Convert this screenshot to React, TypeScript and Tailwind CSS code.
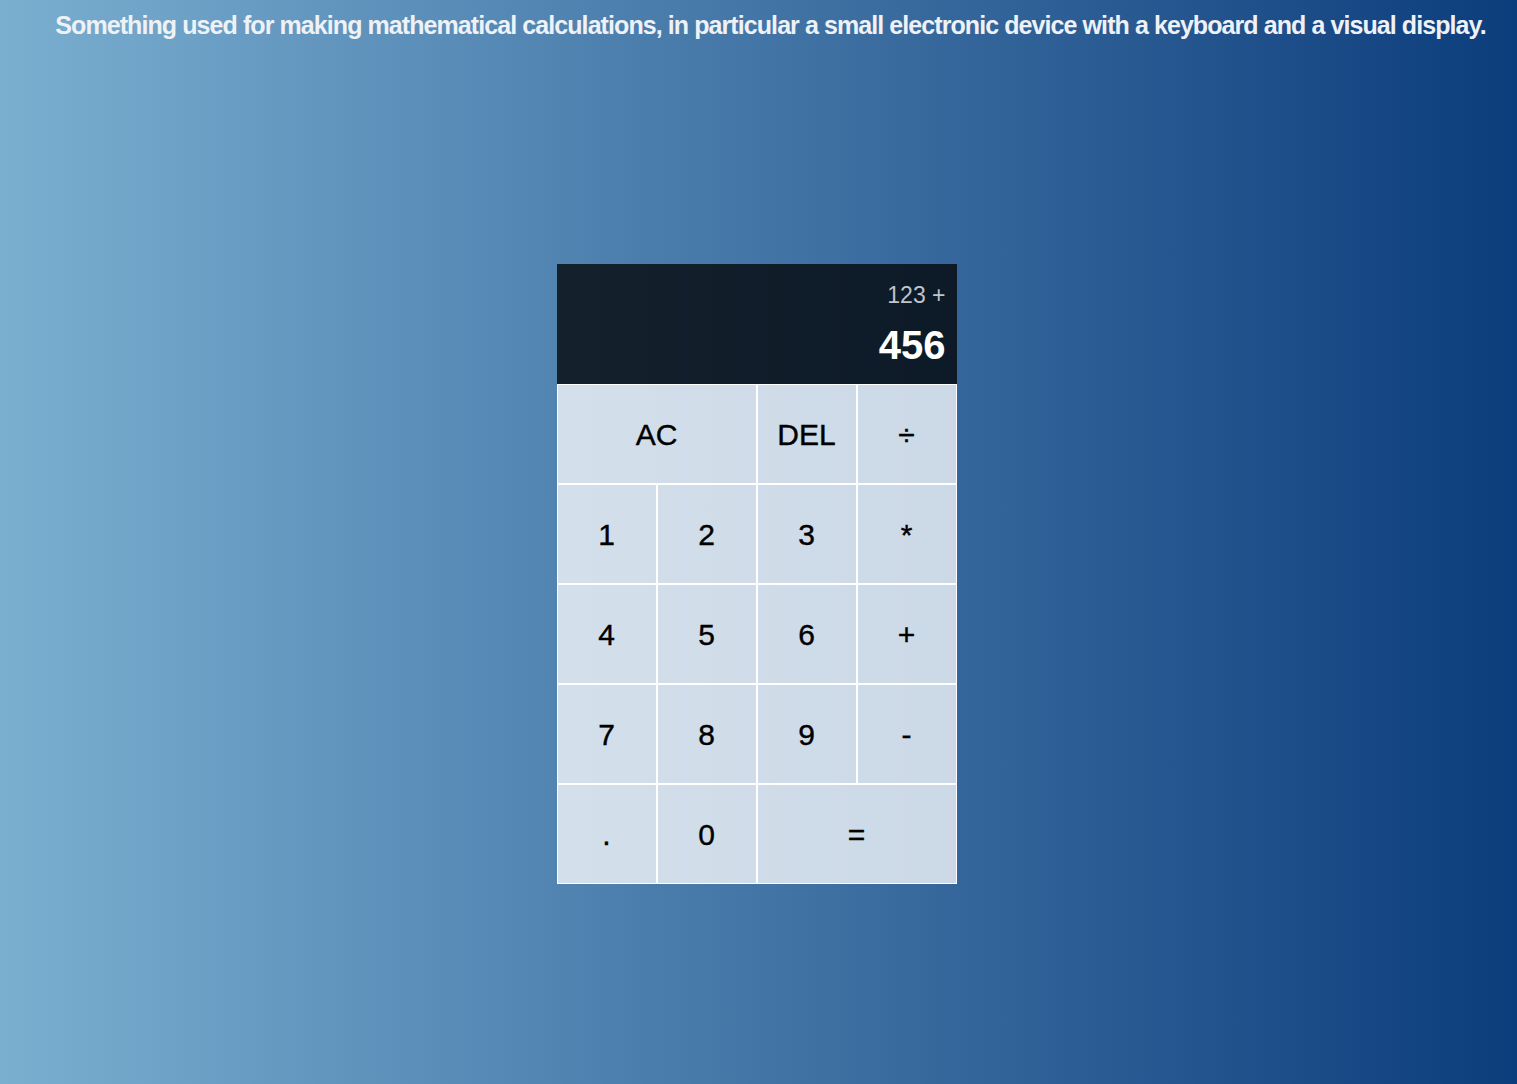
import React from "react";

const keys: { label: string; span?: boolean }[] = [
  { label: "AC", span: true },
  { label: "DEL" },
  { label: "÷" },
  { label: "1" },
  { label: "2" },
  { label: "3" },
  { label: "*" },
  { label: "4" },
  { label: "5" },
  { label: "6" },
  { label: "+" },
  { label: "7" },
  { label: "8" },
  { label: "9" },
  { label: "-" },
  { label: "." },
  { label: "0" },
  { label: "=", span: true },
];

export default function App() {
  return (
    <div className="min-h-screen w-full bg-gradient-to-r from-[#7bafd0] to-[#0b3d7c] flex flex-col items-center">
      <h1 className="pt-[9px] pl-[24px] whitespace-nowrap text-[25px] leading-[32px] font-bold tracking-[-0.92px] text-[#eef1f5] [font-family:'Liberation_Sans',Arial,sans-serif]">
        Something used for making mathematical calculations, in particular a small electronic device with a keyboard and a visual display.
      </h1>
      <div className="mt-[223px] mr-[4px] grid grid-cols-[repeat(4,100px)] grid-rows-[120px_repeat(5,100px)] [font-family:'Liberation_Sans',Arial,sans-serif]">
        <div className="col-span-4 bg-black/75 flex flex-col items-end justify-around px-[11px] py-[10px]">
          <div className="text-[23px] leading-[26px] text-white/75">123 +</div>
          <div className="text-[40px] leading-[44px] text-white font-bold">456</div>
        </div>
        {keys.map((k) => (
          <button
            key={k.label}
            className={`${k.span ? "col-span-2" : ""} border border-white bg-white/75 text-[30px] text-black [-webkit-text-stroke:0.4px_black] flex items-center justify-center cursor-pointer`}
          >
            {k.label}
          </button>
        ))}
      </div>
    </div>
  );
}
